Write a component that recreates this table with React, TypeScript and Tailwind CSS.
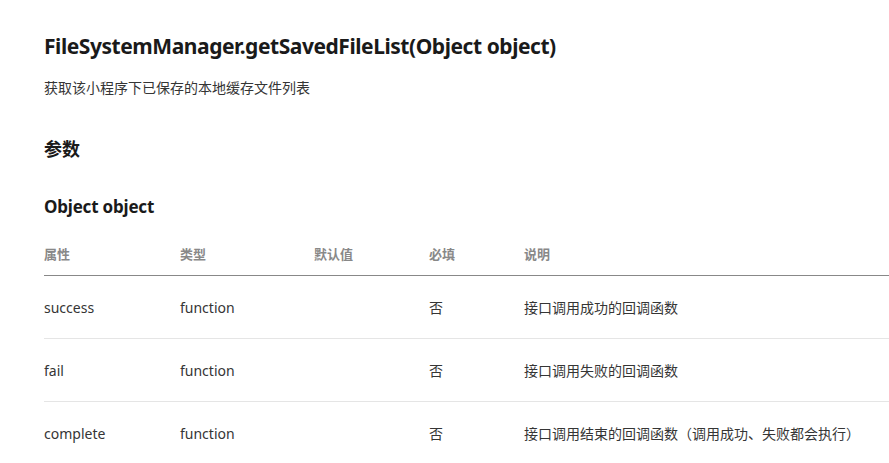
export default function App() {
  const rows = [
    { name: "success", type: "function", def: "", req: "否", desc: "接口调用成功的回调函数" },
    { name: "fail", type: "function", def: "", req: "否", desc: "接口调用失败的回调函数" },
    { name: "complete", type: "function", def: "", req: "否", desc: "接口调用结束的回调函数（调用成功、失败都会执行）" },
  ];
  const font = { fontFamily: '"Noto Sans", "Noto Sans CJK SC", sans-serif' };
  return (
    <div className="w-[889px] h-[463px] overflow-hidden bg-white pl-[44px] text-[#353535]" style={font}>
      <h1 className="mt-[31px] text-[21px] leading-[30px] font-bold text-[#1a1a1a] tracking-[-0.45px]">
        FileSystemManager.getSavedFileList(Object object)
      </h1>
      <p className="mt-[16px] text-[14px] leading-[22px] text-[#353535]">获取该小程序下已保存的本地缓存文件列表</p>
      <h2 className="mt-[37px] text-[18px] leading-[26px] font-bold text-[#1a1a1a]">参数</h2>
      <h3 className="mt-[33px] text-[17px] leading-[24px] font-bold text-[#1a1a1a] tracking-[-0.2px]">Object object</h3>
      <div className="mt-[15px] text-[14px]">
        <div className="flex h-[42px] items-center border-b border-[#888888] font-bold text-[#888888] text-[13px]">
          <div className="w-[136px]">属性</div>
          <div className="w-[134px]">类型</div>
          <div className="w-[115px]">默认值</div>
          <div className="w-[95px]">必填</div>
          <div className="flex-1">说明</div>
        </div>
        {rows.map((r, i) => (
          <div
            key={r.name}
            className={`flex h-[63px] items-center ${i < rows.length - 1 ? "border-b border-[#e5e5e5]" : ""}`}
          >
            <div className="w-[136px]">{r.name}</div>
            <div className="w-[134px]">{r.type}</div>
            <div className="w-[115px]">{r.def}</div>
            <div className="w-[95px]">{r.req}</div>
            <div className="flex-1 text-[14px]">{r.desc}</div>
          </div>
        ))}
      </div>
    </div>
  );
}
